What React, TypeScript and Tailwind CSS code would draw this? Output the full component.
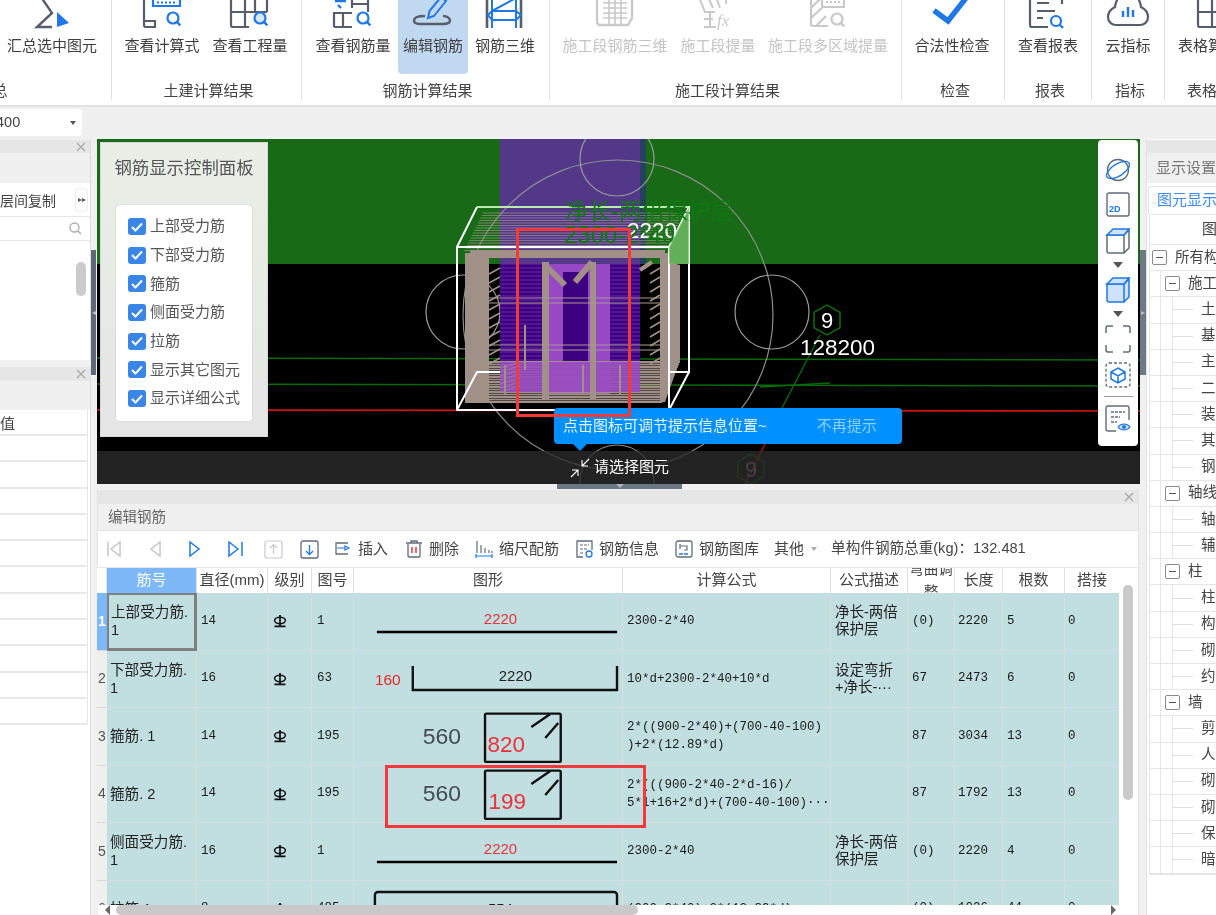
import React from 'react';

const D = '#565d6b';
const B = '#1f78e6';
const G = '#c9c9c9';

function Mag({ x, y, r = 5.5, c = B, fill = 'none' }: { x: number; y: number; r?: number; c?: string; fill?: string }) {
  return (
    <g>
      <circle cx={x} cy={y} r={r} fill={fill} stroke={c} strokeWidth="2.2" />
      <path d={`M${x + r * 0.7} ${y + r * 0.7}l3.5 3.5`} stroke={c} strokeWidth="2.4" fill="none" />
    </g>
  );
}

function Ico({ children }: { children: React.ReactNode }) {
  return (
    <svg width="40" height="31" viewBox="0 0 40 31" fill="none" className="shrink-0 overflow-visible">
      {children}
    </svg>
  );
}

const icons: Record<string, React.ReactNode> = {
  sum: (
    <Ico>
      <path d="M9 -3L20 13L5 27H20" stroke={D} strokeWidth="2.4" />
      <path d="M25 12L37 23L25 27Z" fill={B} />
    </Ico>
  ),
  calc: (
    <Ico>
      <path d="M2 -3V25a2 2 0 0 0 2 2H13V21H3" stroke={D} strokeWidth="2.2" />
      <path d="M11 -3V6H38V-3" stroke={B} strokeWidth="2.2" />
      <path d="M15 2.5H34" stroke={B} strokeWidth="2" strokeDasharray="2 2" />
      <Mag x={31} y={18} />
    </Ico>
  ),
  qty: (
    <Ico>
      <path d="M1 -3V25a2 2 0 0 0 2 2H19M1 12H37M15 -3V27M25 -3V12M37 -3V12" stroke={D} strokeWidth="2.2" />
      <Mag x={30} y={18} fill="#d8e8fb" />
    </Ico>
  ),
  rebar: (
    <Ico>
      <path d="M1 27V13H19M10 13V27M1 27H19M19 -3V8M35 -3V12M19 4H35" stroke={D} strokeWidth="2.2" />
      <path d="M2 1H13M5 5l3 3" stroke={B} strokeWidth="2.4" />
      <Mag x={30} y={18} />
    </Ico>
  ),
  edit: (
    <Ico>
      <path d="M12 16C3 16 1 18 1 20.5S3 24 8 24H30C35 24 37 22 37 20.5S35 16 30 16" stroke={D} strokeWidth="2.4" />
      <path d="M15 18L16.5 11L28 -3L33 1L21 16Z" stroke={B} strokeWidth="2" fill="#fff0" />
    </Ico>
  ),
  three: (
    <Ico>
      <path d="M2 -3V28M36 -3V28" stroke={D} strokeWidth="2.6" />
      <path d="M7 -3V28M31 -3V28M7 11H31M7 20H31M31 11L36 15L31 20M7 20L3 15L7 11M31 -2L7 11" stroke={B} strokeWidth="2" />
    </Ico>
  ),
  seg3: (
    <Ico>
      <path d="M2 -3V22a3 3 0 0 0 3 3H33L37 18V-3" stroke={G} strokeWidth="2.4" />
      <path d="M8 3H32M8 8H32M8 13H32M8 18H32M14 -3V25M20 -3V25M26 -3V25" stroke={G} strokeWidth="1.6" />
    </Ico>
  ),
  segf: (
    <Ico>
      <path d="M1 -3L7 12H17M12 12V27M6 27H18M6 19H15M10 -3L15 8M18 -3L22 8M28 -3V4" stroke={G} strokeWidth="2" />
      <text x="19" y="26" fontFamily="'Liberation Serif',serif" fontStyle="italic" fontSize="17" fill={G}>fx</text>
    </Ico>
  ),
  segm: (
    <Ico>
      <path d="M3 -3V24a2 2 0 0 0 2 2H20M3 8L14 -3M3 18L16 6M8 26L18 16" stroke={G} strokeWidth="2.2" />
      <path d="M14 -3V7H36V-3" stroke={G} strokeWidth="2" />
      <path d="M18 2H32" stroke={G} strokeWidth="2" strokeDasharray="2 2" />
      <Mag x={29} y={19} c={G} />
    </Ico>
  ),
  check: (
    <Ico>
      <path d="M2 10.5L16 21L34 -2" stroke={B} strokeWidth="5.4" />
    </Ico>
  ),
  report: (
    <Ico>
      <path d="M2 -3V25a2 2 0 0 0 2 2H20M34 4V-3" stroke={D} strokeWidth="2.2" />
      <path d="M9 3H21M9 11H27M9 18H15" stroke={D} strokeWidth="2.2" />
      <Mag x={28} y={21} r={5} />
    </Ico>
  ),
  cloud: (
    <Ico>
      <path d="M10 -2C8 2 7 4 7 7C3 9 0 13 0 17C0 22 4 25 8 25H32C36 25 40 22 40 17C40 13 37 9 33 7C33 4 32 2 30 -2" stroke={D} strokeWidth="2.2" />
      <path d="M15 11V17M20 7V17M25 10V17" stroke={B} strokeWidth="2.4" />
    </Ico>
  ),
  table: (
    <Ico>
      <path d="M10 -3V25a2 2 0 0 0 2 2H28M10 12H46M24 -3V27M36 -3V12" stroke={D} strokeWidth="2.2" />
      <Mag x={39} y={20} />
    </Ico>
  ),
};

function RBtn({ icon, label, w, dis, on, ml }: { icon: string; label: string; w: string; dis?: boolean; on?: boolean; ml?: string }) {
  return (
    <div className={`${w} ${ml ?? ''} h-[74px] shrink-0 flex flex-col items-center overflow-visible ${on ? 'bg-[#c0d8f0] rounded-b-[4px]' : ''}`}>
      {icons[icon]}
      <div className={`mt-[5px] h-[20px] leading-[20px] text-[15px] whitespace-nowrap ${dis ? 'text-[#c4c4c4]' : 'text-[#3f3f3f]'}`}>{label}</div>
    </div>
  );
}

function RGroup({ w, label, pad, children, last }: { w: string; label: string; pad?: string; children: React.ReactNode; last?: boolean }) {
  return (
    <div className={`${w} shrink-0 h-[100px] relative flex flex-col ${last ? '' : 'border-r border-[#e0e0e0]'}`}>
      <div className={`flex h-[74px] ${pad ?? ''}`}>{children}</div>
      <div className="mt-[6px] h-[22px] pl-[4px] leading-[22px] text-center text-[15px] text-[#444444] whitespace-nowrap">{label}</div>
    </div>
  );
}

function X() {
  return (
    <svg width="10" height="10" viewBox="0 0 10 10" className="shrink-0">
      <path d="M1 1L9 9M9 1L1 9" stroke="#a8a8a8" strokeWidth="1.3" />
    </svg>
  );
}

function Steel() {
  return (
    <svg width="14" height="14" viewBox="0 0 14 14">
      <ellipse cx="7" cy="6.5" rx="5.4" ry="3.2" fill="none" stroke="#111" strokeWidth="1.5" />
      <path d="M7 1V12M1.5 12.3H12.5" stroke="#111" strokeWidth="1.7" />
    </svg>
  );
}

function Shape({ kind }: { kind: number }) {
  const red = '#e8343a';
  return (
    <svg width="269" height="57" viewBox="0 0 269 57" className="block">
      {kind === 1 && (
        <>
          <text x="147" y="31" textAnchor="middle" fontSize="15" fill={red}>2220</text>
          <path d="M23 39H264" stroke="#000" strokeWidth="2.4" />
        </>
      )}
      {kind === 2 && (
        <>
          <text x="21" y="35" fontSize="15.5" fill="#ee2222">160</text>
          <path d="M59 16V40H264V16" stroke="#111" strokeWidth="2.4" fill="none" />
          <text x="162" y="31" textAnchor="middle" fontSize="15" fill="#222">2220</text>
        </>
      )}
      {(kind === 3 || kind === 4) && (
        <>
          <text x="69" y="36" fontSize="23" fill="#444b55">560</text>
          <rect x="131.5" y="5.5" width="76" height="48.5" rx="1.5" fill="none" stroke="#111" strokeWidth="2.4" />
          <path d="M178 19L197 6M192 30L205 15" stroke="#111" strokeWidth="2.4" />
          <text x={kind === 3 ? 134 : 135} y="44" fontSize="22.5" fill="#ee3038">{kind === 3 ? '820' : '199'}</text>
        </>
      )}
      {kind === 6 && (
        <>
          <path d="M21 25V15a3 3 0 0 1 3-3H261a3 3 0 0 1 3 3V25" stroke="#111" strokeWidth="2.4" fill="none" />
          <text x="147" y="34" textAnchor="middle" fontSize="15" fill="#222">554</text>
        </>
      )}
    </svg>
  );
}

const GRID = 'grid grid-cols-[10px_90px_71px_44px_42px_269px_208px_77px_47px_48px_62px_55px]';
const CELL = 'border-r border-b border-[#d6dedf] flex items-center overflow-hidden';
const MONO = "font-['Liberation_Mono','Noto_Sans_CJK_SC',monospace] text-[12.5px] text-[#1a1a1a]";

const rows = [
  { no: 1, name: ['上部受力筋.', '1'], d: '14', fig: '1', kind: 1, f: ['2300-2*40'], desc: ['净长-两倍', '保护层'], bend: '(0)', len: '2220', cnt: '5' },
  { no: 2, name: ['下部受力筋.', '1'], d: '16', fig: '63', kind: 2, f: ['10*d+2300-2*40+10*d'], desc: ['设定弯折', '+净长-···'], bend: '67', len: '2473', cnt: '6' },
  { no: 3, name: ['箍筋. 1'], d: '14', fig: '195', kind: 3, f: ['2*((900-2*40)+(700-40-100)', ')+2*(12.89*d)'], desc: [], bend: '87', len: '3034', cnt: '13' },
  { no: 4, name: ['箍筋. 2'], d: '14', fig: '195', kind: 4, f: ['2*(((900-2*40-2*d-16)/', '5*1+16+2*d)+(700-40-100)···'], desc: [], bend: '87', len: '1792', cnt: '13' },
  { no: 5, name: ['侧面受力筋.', '1'], d: '16', fig: '1', kind: 1, f: ['2300-2*40'], desc: ['净长-两倍', '保护层'], bend: '(0)', len: '2220', cnt: '4' },
  { no: 6, name: ['拉筋.1'], d: '8', fig: '485', kind: 6, f: ['(900-2*40)+2*(12.89*d)'], desc: [], bend: '(0)', len: '1026', cnt: '44' },
];

const tree: [number, string][] = [
  [0, '所有构件类型'], [1, '施工段'], [2, '土方'], [2, '基础'], [2, '主体'], [2, '二次结构'], [2, '装修'], [2, '其它'], [2, '钢筋'],
  [1, '轴线'], [2, '轴网'], [2, '辅助轴线'], [1, '柱'], [2, '柱'], [2, '构造柱'], [2, '砌体柱'], [2, '约束边缘'],
  [1, '墙'], [2, '剪力墙'], [2, '人防门框墙'], [2, '砌体墙'], [2, '砌体加筋'], [2, '保温墙'], [2, '暗梁'],
];

const checks = ['上部受力筋', '下部受力筋', '箍筋', '侧面受力筋', '拉筋', '显示其它图元', '显示详细公式'];

function Scene() {
  const hatch: number[] = [];
  for (let y = 213; y < 252; y += 2.5) hatch.push(y);
  const low: number[] = [];
  for (let y = 362; y < 403; y += 2.5) low.push(y);
  const mid: number[] = [];
  for (let y = 264; y < 362; y += 4) mid.push(y);
  const side: number[] = [];
  for (let y = 268; y < 362; y += 9) side.push(y);
  const span: number[] = [];
  for (let y = 364; y < 392; y += 4) span.push(y);
  return (
    <svg width="1043" height="345" viewBox="97 139 1043 345" className="absolute left-0 top-0">
      <rect x="97" y="139" width="1043" height="125" fill="#186a17" />
      <rect x="500" y="139" width="140" height="125" fill="#53388a" />
      <rect x="640" y="139" width="6" height="125" fill="#26405f" />
      <path d="M97 358L1140 360M97 384L1140 386" stroke="#0a6a0a" strokeWidth="1.6" />
      <path d="M760 387L830 383" stroke="#0a6a0a" strokeWidth="1.6" />
      <path d="M97 410L1140 411" stroke="#d01414" strokeWidth="1.6" />
      <path d="M820 335L782 408" stroke="#0a6a0a" strokeWidth="1.4" />
      <path d="M765 444L745 484" stroke="#b01010" strokeWidth="1.4" />
      <circle cx="618" cy="315" r="155" fill="none" stroke="#8c8c8c" strokeWidth="1.2" />
      <circle cx="617" cy="159" r="37" fill="none" stroke="#9a9a9a" strokeWidth="1.2" />
      <circle cx="463" cy="312" r="37" fill="none" stroke="#9a9a9a" strokeWidth="1.2" />
      <circle cx="772" cy="312" r="37" fill="none" stroke="#9a9a9a" strokeWidth="1.2" />
      <circle cx="617" cy="482" r="37" fill="none" stroke="#8c8c8c" strokeWidth="1.2" />
      <path d="M751 454L764 461.5V476.5L751 484L738 476.5V461.5Z" fill="none" stroke="#0d7a0d" strokeWidth="1.2" />
      <rect x="500" y="264" width="140" height="100" fill="#3c0080" />
      <rect x="542" y="264" width="68" height="130" fill="#9748c4" />
      <rect x="563" y="272" width="25" height="90" fill="#3c0080" />
      {mid.map((y) => (
        <path key={y} d={`M500 ${y}H542M610 ${y}H640`} stroke="#6a2ba8" strokeWidth="1" />
      ))}
      {hatch.map((y) => (
        <path key={y} d={`M${483 - (y - 213) * 0.5} ${y}H${684 - (y - 213) * 0.5}`} stroke="#a89a90" strokeWidth="1.1" opacity="0.62" />
      ))}
      {side.map((y) => (
        <path key={y} d={`M489 ${y + 6}L500 ${y}M650 ${y + 6}L660 ${y}`} stroke="#a09088" strokeWidth="1.6" />
      ))}
      {low.map((y) => (
        <path key={y} d={`M${488 - (y - 362) * 0.55} ${y}H${680 - (y - 362) * 0.45}`} stroke="#a09088" strokeWidth="1.9" />
      ))}
      <path d="M500 362H640V392H500Z" fill="#9748c4" opacity="0.88" />
      {span.map((y) => (
        <path key={y} d={`M500 ${y + 4}L520 ${y - 2}`} stroke="#a09088" strokeWidth="1" opacity="0.7" />
      ))}
      <rect x="465" y="253" width="24" height="150" fill="#a09088" />
      <rect x="660" y="253" width="9" height="120" fill="#a09088" />
      <path d="M669 262L680 265V360L665 402H660V262Z" fill="#a09088" />
      <path d="M470 250H665V258H470Z" fill="#a09088" />
      <path d="M542 262H549V400H542ZM590 262H596V400H590Z" fill="#a09088" />
      <path d="M545 265L565 285M592 262L575 282" stroke="#a09088" strokeWidth="6" />
      <path d="M652 262L640 270" stroke="#a09088" strokeWidth="4" />
      <path d="M489 298H660M489 303H660M489 345H660M489 350H660" stroke="#a89a90" strokeWidth="1.2" />
      <path d="M525 325V370M505 365V395M583 365V395M620 365V395" stroke="#a09088" strokeWidth="2" />
      <path d="M457 247H669V410H457ZM477 207H689V372H669M457 247L477 207M669 247L689 207M457 410L477 372H500M669 410L689 372" fill="none" stroke="#ffffff" strokeWidth="2" />
      <path d="M669 247L689 207V264H669Z" fill="#75c06c" opacity="0.8" />
      <path d="M477 207H689" stroke="#b9eab0" strokeWidth="2" />
      <text x="627" y="238" fontSize="22.5" fill="#ffffff">2220</text>
      <text x="565" y="219" fontSize="23" fill="#0c7a10">净长-两倍保护层</text>
      <text x="564" y="243" fontSize="24" fill="#0c7a10">2300-2*40</text>
      <path d="M827 305L840 312.5V327.5L827 335L814 327.5V312.5Z" fill="none" stroke="#0d7a0d" strokeWidth="1.4" />
      <text x="827" y="328" textAnchor="middle" fontSize="22" fill="#ffffff">9</text>
      <text x="800" y="355" fontSize="22.5" fill="#ffffff">128200</text>
      <text x="751" y="477" textAnchor="middle" fontSize="22" fill="#999999">9</text>
    </svg>
  );
}

function ToolIcon({ children }: { children: React.ReactNode }) {
  return (
    <svg width="18" height="20" viewBox="0 0 18 20" fill="none" className="shrink-0">
      {children}
    </svg>
  );
}

function Tool({ ml, icon, label }: { ml: string; icon: React.ReactNode; label: string }) {
  return (
    <div className={`${ml} flex items-center gap-[6px] shrink-0`}>
      <ToolIcon>{icon}</ToolIcon>
      <span>{label}</span>
    </div>
  );
}

export default function App() {
  return (
    <div className="w-[1216px] h-[915px] overflow-hidden flex flex-col bg-[#f0f0f0] text-[#444444] font-['Liberation_Sans','Noto_Sans_CJK_SC',sans-serif] [filter:blur(0.35px)]">
      {/* ribbon */}
      <div className="h-[107px] shrink-0 bg-white border-b-2 border-[#e2e2e2] flex overflow-hidden">
        <div className="flex ml-[-130px]">
          <RGroup w="w-[242px]" label="汇总" pad="justify-end pr-[14px]">
            <RBtn icon="sum" label="汇总选中图元" w="w-[90px]" />
          </RGroup>
          <RGroup w="w-[190px]" label="土建计算结果" pad="pl-[6px]">
            <RBtn icon="calc" label="查看计算式" w="w-[88px]" />
            <RBtn icon="qty" label="查看工程量" w="w-[88px]" />
          </RGroup>
          <RGroup w="w-[248px]" label="钢筋计算结果" pad="pl-[11px]">
            <RBtn icon="rebar" label="查看钢筋量" w="w-[80px]" />
            <RBtn icon="edit" label="编辑钢筋" w="w-[70px]" ml="ml-[5px]" on />
            <RBtn icon="three" label="钢筋三维" w="w-[70px]" ml="ml-[2px]" />
          </RGroup>
          <RGroup w="w-[352px]" label="施工段计算结果" pad="pl-[10px]">
            <RBtn icon="seg3" label="施工段钢筋三维" w="w-[110px]" dis />
            <RBtn icon="segf" label="施工段提量" w="w-[96px]" dis />
            <RBtn icon="segm" label="施工段多区域提量" w="w-[124px]" dis />
          </RGroup>
          <RGroup w="w-[103px]" label="检查">
            <RBtn icon="check" label="合法性检查" w="w-[100px]" />
          </RGroup>
          <RGroup w="w-[87px]" label="报表">
            <RBtn icon="report" label="查看报表" w="w-[86px]" />
          </RGroup>
          <RGroup w="w-[73px]" label="指标">
            <RBtn icon="cloud" label="云指标" w="w-[72px]" />
          </RGroup>
          <RGroup w="w-[100px]" label="表格算量" last>
            <RBtn icon="table" label="表格算量" w="w-[86px]" />
          </RGroup>
        </div>
      </div>

      {/* selector bar */}
      <div className="h-[32px] shrink-0 flex items-start pt-[2px]">
        <div className="w-[82px] h-[27px] bg-white rounded-r-[4px] flex items-center justify-between pr-[6px] text-[14.5px] text-[#444444]">
          <span className="ml-[-4px]">400</span>
          <span className="w-0 h-0 border-x-[3px] border-x-transparent border-t-[4px] border-t-[#555555]" />
        </div>
      </div>

      {/* main */}
      <div className="flex-1 flex min-h-0">
        {/* left */}
        <div className="w-[91px] shrink-0 flex flex-col pt-px">
          <div className="h-[220px] shrink-0 bg-white border-r border-[#dddddd] flex flex-col">
            <div className="h-[13px] bg-[#e6e6e6] flex items-center justify-end pr-[4px]"><X /></div>
            <div className="h-[30px] bg-[#f0f0f0]" />
            <div className="h-[34px] flex items-center justify-between pr-[2px] border-b border-[#e6e6e6]">
              <span className="text-[14px] pt-[3px] whitespace-nowrap">层间复制</span>
              <div className="w-[13px] h-[24px] border border-[#eeeeee] rounded-[4px] text-[8px] leading-[22px] text-center text-[#555555]">▸▸</div>
            </div>
            <div className="h-[24px] flex items-center justify-end pr-[8px] border-b border-[#e6e6e6]">
              <svg width="13" height="13" viewBox="0 0 13 13" fill="none"><circle cx="5.5" cy="5.5" r="4.5" stroke="#b0b0b0" strokeWidth="1.4" /><path d="M9 9l3 3" stroke="#b0b0b0" strokeWidth="1.6" /></svg>
            </div>
            <div className="flex-1 flex justify-end pr-[4px] pt-[21px]">
              <div className="w-[10px] h-[34px] rounded-[5px] bg-[#cbcbcb]" />
            </div>
          </div>
          <div className="flex-1 mt-[7px] bg-white border-r border-[#dddddd] flex flex-col">
            <div className="h-[14px] shrink-0 bg-[#e6e6e6] flex items-center justify-end pr-[4px]"><X /></div>
            <div className="h-[29px] shrink-0 bg-[#f0f0f0]" />
            <div className="w-[88px] border-r border-[#e6e6e6]">
              <div className="h-[26px] border-b-2 border-[#e8e8e8] text-[15px] leading-[27px] whitespace-nowrap">值</div>
              {Array.from({ length: 11 }).map((_, i) => (
                <div key={i} className="h-[26.3px] border-b-2 border-[#e8e8e8]" />
              ))}
            </div>
          </div>
        </div>

        {/* left splitter */}
        <div className="w-[6px] shrink-0 pt-[111px]">
          <div className="w-[5px] h-[125px] bg-[#5f6975] flex items-center justify-center text-[8px] text-[#b9c0c8]">◂</div>
        </div>

        {/* center */}
        <div className="w-[1043px] shrink-0 flex flex-col">
          <div className="h-[345px] shrink-0 relative bg-black overflow-hidden">
            <Scene />
            {/* control panel */}
            <div className="absolute left-[3px] top-[3px] w-[168px] h-[295px] bg-gradient-to-b from-[#e9efe7] to-[#e5e5e5] border border-[#d8d8d8] pt-[13px]">
              <div className="text-center text-[17.4px] leading-[24px] text-[#555555] whitespace-nowrap">钢筋显示控制面板</div>
              <div className="mt-[24px] mx-[14px] h-[218px] bg-white rounded-[4px] border border-[#dddddd] pl-[12px] pt-[13px] flex flex-col gap-[11.7px]">
                {checks.map((c) => (
                  <div key={c} className="flex items-center h-[17px] gap-[4px] whitespace-nowrap text-[15px] text-[#555555]">
                    <span className="w-[18px] h-[17px] rounded-[3px] bg-[#3a86e6] flex items-center justify-center shrink-0">
                      <svg width="12" height="10" viewBox="0 0 12 10" fill="none"><path d="M1 5l3.5 3.5L11 1.5" stroke="#fff" strokeWidth="2" /></svg>
                    </span>
                    {c}
                  </div>
                ))}
              </div>
            </div>
            {/* view toolbar */}
            <div className="absolute left-[1001px] top-[1px] w-[40px] h-[306px] bg-white rounded-[4px] flex flex-col items-center pt-[16px]">
              <svg width="28" height="28" viewBox="0 0 28 28" fill="none" className="shrink-0">
                <circle cx="14" cy="14" r="10.5" stroke="#5f6b7a" strokeWidth="1.3" />
                <ellipse cx="14" cy="14" rx="13" ry="6" transform="rotate(-32 14 14)" stroke={B} strokeWidth="1.4" />
              </svg>
              <svg width="24" height="25" viewBox="0 0 24 25" fill="none" className="mt-[8px] shrink-0">
                <rect x="1" y="1" width="22" height="23" rx="2" stroke="#5f6b7a" strokeWidth="1.4" />
                <text x="3" y="20" fontSize="9" fontWeight="700" fill={B}>2D</text>
              </svg>
              <svg width="26" height="28" viewBox="0 0 26 28" fill="none" className="mt-[10px] shrink-0">
                <path d="M2 8H19V26H4a2 2 0 0 1-2-2ZM19 26L24 21V3L19 8" stroke="#5f6b7a" strokeWidth="1.5" />
                <path d="M2 8L8 2H24L19 8Z" fill="#cfe2fb" stroke={B} strokeWidth="1.5" />
              </svg>
              <span className="mt-[7px] w-0 h-0 border-x-[5px] border-x-transparent border-t-[6px] border-t-[#555555] shrink-0" />
              <svg width="26" height="28" viewBox="0 0 26 28" fill="none" className="mt-[8px] shrink-0">
                <path d="M2 8H19V26H4a2 2 0 0 1-2-2ZM19 26L24 21V3L19 8" fill="#cfe2fb" stroke={B} strokeWidth="1.5" />
                <path d="M2 8L8 2H24L19 8Z" fill="#cfe2fb" stroke={B} strokeWidth="1.5" />
              </svg>
              <span className="mt-[7px] w-0 h-0 border-x-[5px] border-x-transparent border-t-[6px] border-t-[#555555] shrink-0" />
              <svg width="26" height="28" viewBox="0 0 26 28" fill="none" className="mt-[8px] shrink-0">
                <path d="M1 8V3a2 2 0 0 1 2-2H8M18 1H23a2 2 0 0 1 2 2V8M25 20V25a2 2 0 0 1-2 2H18M8 27H3a2 2 0 0 1-2-2V20" stroke="#5f6b7a" strokeWidth="1.5" />
              </svg>
              <svg width="26" height="26" viewBox="0 0 26 26" fill="none" className="mt-[9px] shrink-0">
                <rect x="1" y="1" width="24" height="24" rx="3" stroke="#5f6b7a" strokeWidth="1.3" strokeDasharray="3 2" />
                <path d="M13 6L20 10V17L13 21L6 17V10ZM6 10L13 14L20 10M13 14V21" stroke={B} strokeWidth="1.5" />
              </svg>
              <div className="mt-[8px] w-[29px] h-px bg-[#9a9a9a] shrink-0" />
              <svg width="26" height="28" viewBox="0 0 26 28" fill="none" className="mt-[8px] shrink-0">
                <path d="M11 26H3a2 2 0 0 1-2-2V3a2 2 0 0 1 2-2H22a2 2 0 0 1 2 2V15" stroke="#5f6b7a" strokeWidth="1.4" />
                <path d="M6 7H20M6 12H15M6 17H12" stroke="#5f6b7a" strokeWidth="1.3" strokeDasharray="3 1" />
                <path d="M13 22C16 18 22 18 25 22C22 26 16 26 13 22Z" fill="#cfe2fb" stroke={B} strokeWidth="1.2" />
                <circle cx="19" cy="22" r="2" fill={B} />
              </svg>
            </div>
            {/* status bar */}
            <div className="absolute left-0 bottom-0 w-full h-[33px] bg-[#2a2a2a]/80 flex items-center pl-[473px] text-[15px] text-white whitespace-nowrap">
              <svg width="20" height="20" viewBox="0 0 20 20" fill="none" className="mr-[4px]">
                <path d="M19 1L12 8M12 2V8H18M1 19L8 12M2 12H8V18" stroke="#fff" strokeWidth="1.1" />
              </svg>
              请选择图元
            </div>
            {/* tip */}
            <div className="absolute left-[457px] top-[269px] w-[348px] h-[36px] bg-[#0091ff] rounded-[4px] flex items-center pl-[9px] text-[15px] whitespace-nowrap text-[#e8f4ff]">
              <span>点击图标可调节提示信息位置~</span>
              <span className="ml-[50px] text-[#8fcfff]">不再提示</span>
              <span className="absolute left-[19px] top-[36px] w-0 h-0 border-x-[7px] border-x-transparent border-t-[7px] border-t-[#0091ff]" />
            </div>
            {/* red annotation over the model */}
            <div className="absolute left-[419px] top-[89px] w-[115px] h-[189px] border-[3px] border-[#f53838] pointer-events-none" />
          </div>
          {/* collapse tab */}
          <div className="h-[6px] shrink-0 flex">
            <div className="ml-[460px] w-[125px] h-[5px] bg-[#6b7785] flex justify-center">
              <span className="w-0 h-0 border-x-[4px] border-x-transparent border-t-[4px] border-t-[#aeb6bf]" />
            </div>
          </div>

          {/* bottom panel */}
          <div className="flex-1 min-h-0 flex flex-col bg-white w-[1042px] border-x border-[#e2e2e2]">
            <div className="h-[14px] shrink-0 bg-[#e6e6e6] flex items-center justify-end pr-[4px]"><X /></div>
            <div className="h-[27px] shrink-0 bg-[#f0f0f0] border-b border-[#e6e6e6] pl-[10px] text-[14.5px] leading-[27px] text-[#666666]">编辑钢筋</div>
            <div className="h-[37px] shrink-0 border-b border-[#e6e6e6] flex items-center text-[15px] text-[#444444] whitespace-nowrap">
              <svg width="224" height="20" viewBox="0 0 224 20" fill="none" className="ml-[9px] shrink-0">
                <path d="M1 3V17M13 3L4 10L13 17Z" stroke="#c4c4c4" strokeWidth="1.4" />
                <path d="M53 3L44 10L53 17Z" stroke="#c4c4c4" strokeWidth="1.4" />
                <path d="M83 3L92 10L83 17Z" stroke={B} strokeWidth="1.5" />
                <path d="M122 3L131 10L122 17Z M135 3V17" stroke={B} strokeWidth="1.5" />
                <rect x="158" y="2" width="17" height="17" rx="2" stroke="#c9c9c9" strokeWidth="1.2" />
                <path d="M166.5 15V6M163 9l3.5-3.5L170 9" stroke="#c9c9c9" strokeWidth="1.2" />
                <rect x="194" y="2" width="17" height="17" rx="2" stroke="#5f6b7a" strokeWidth="1.3" />
                <path d="M202.5 6V15M199 12l3.5 3.5L206 12" stroke={B} strokeWidth="1.3" />
              </svg>
              <Tool ml="ml-[3px]" label="插入" icon={<><path d="M14 4H2V15H14" stroke="#5f6b7a" strokeWidth="1.3" /><path d="M3 9H11M11 7l4 2-4 2Z" stroke={B} strokeWidth="1.2" /></>} />
              <Tool ml="ml-[17px]" label="删除" icon={<><path d="M3 5V17a1 1 0 0 0 1 1H14a1 1 0 0 0 1-1V5M1 4H17M6 4V2H12V4" stroke="#5f6b7a" strokeWidth="1.3" /><path d="M7 8V14M11 8V14" stroke="#e03030" strokeWidth="1.4" /></>} />
              <Tool ml="ml-[16px]" label="缩尺配筋" icon={<><path d="M2 2V14M6 6V14M10 9V14M14 11V14M17 12V14" stroke="#5f6b7a" strokeWidth="1.2" /><path d="M1 15V19M17 15V19M1 17H17" stroke={B} strokeWidth="1.2" /></>} />
              <Tool ml="ml-[16px]" label="钢筋信息" icon={<><path d="M8 18H2V2H17V11" stroke="#5f6b7a" strokeWidth="1.3" /><path d="M5 6H14M5 10H12M5 14H9" stroke="#5f6b7a" strokeWidth="1.1" strokeDasharray="3 1" /><circle cx="14" cy="15" r="3" stroke={B} strokeWidth="1.3" /></>} />
              <Tool ml="ml-[16px]" label="钢筋图库" icon={<><rect x="1" y="2" width="16" height="16" rx="2" stroke="#5f6b7a" strokeWidth="1.3" /><path d="M5 5V10M5 7H12V11H9" stroke="#5f6b7a" strokeWidth="1.2" /><path d="M4 15H14" stroke={B} strokeWidth="1.4" strokeDasharray="4 1" /></>} />
              <span className="ml-[15px]">其他</span>
              <span className="ml-[7px] w-0 h-0 border-x-[3px] border-x-transparent border-t-[4px] border-t-[#aaaaaa]" />
              <span className="ml-[14px] text-[14.6px]">单构件钢筋总重(kg)：132.481</span>
            </div>

            <div className="flex-1 min-h-0 flex relative">
              <div className="w-[1022px] shrink-0 overflow-hidden -ml-px">
                <div className={`${GRID} h-[25px] text-[15px] text-[#444444] text-center`}>
                  {[['', 'bg-white'], ['筋号', 'bg-[#7db8f8] text-white'], ['直径(mm)', 'bg-white'], ['级别', 'bg-white'], ['图号', 'bg-white'], ['图形', 'bg-white'], ['计算公式', 'bg-white'], ['公式描述', 'bg-white']].map(([t, c], i) => (
                    <div key={i} className={`${c} border-r border-[#e2e2e2] flex items-center justify-center whitespace-nowrap`}>{t}</div>
                  ))}
                  <div className="border-r border-[#e2e2e2] bg-white flex items-center justify-center overflow-hidden leading-[23px] text-[14.5px]">
                    <span className="shrink-0">弯曲调<br />整</span>
                  </div>
                  {['长度', '根数', '搭接'].map((t) => (
                    <div key={t} className="border-r border-[#e2e2e2] bg-white flex items-center justify-center">{t}</div>
                  ))}
                </div>
                {rows.map((r) => (
                  <div key={r.no} className={`${GRID} h-[57.5px] bg-[#c1dee0]`}>
                    <div className={`${r.no === 1 ? 'bg-[#7db8f8] text-white font-bold' : 'bg-[#efefef] text-[#555555]'} border-b border-[#d8d8d8] flex items-center justify-center text-[14px]`}>{r.no}</div>
                    <div className={`${r.no === 1 ? 'border-2 border-r-[3px] border-b-[3px] border-[#808080] pl-[2px]' : `${CELL} pl-[3px]`} flex items-center text-[14.6px] leading-[18px] text-[#222222] whitespace-nowrap overflow-hidden`}>
                      <div>{r.name.map((l, i) => <div key={i}>{l}</div>)}</div>
                    </div>
                    <div className={`${CELL} ${MONO} pl-[4px]`}>{r.d}</div>
                    <div className={`${CELL} pl-[5px]`}><Steel /></div>
                    <div className={`${CELL} ${MONO} pl-[5px]`}>{r.fig}</div>
                    <div className={`${CELL} font-['Liberation_Sans',sans-serif]`}><Shape kind={r.kind} /></div>
                    <div className={`${CELL} ${MONO} pl-[4px] leading-[18px] whitespace-nowrap`}>
                      <div>{r.f.map((l, i) => <div key={i}>{l}</div>)}</div>
                    </div>
                    <div className={`${CELL} pl-[4px] text-[14.5px] leading-[17px] text-[#222222] whitespace-nowrap`}>
                      <div>{r.desc.map((l, i) => <div key={i}>{l}</div>)}</div>
                    </div>
                    <div className={`${CELL} ${MONO} pl-[4px]`}>{r.bend}</div>
                    <div className={`${CELL} ${MONO} pl-[3px]`}>{r.len}</div>
                    <div className={`${CELL} ${MONO} pl-[4px]`}>{r.cnt}</div>
                    <div className={`${CELL} ${MONO} pl-[3px]`}>0</div>
                  </div>
                ))}
              </div>
              <div className="flex-1 pl-[4px] pt-[17px]">
                <div className="w-[10px] h-[215px] rounded-[5px] bg-[#c9c9c9]" />
              </div>
              {/* red annotation */}
              <div className="absolute left-[287px] top-[197px] w-[261px] h-[63px] border-[3px] border-[#f53838] pointer-events-none" />
              {/* horizontal scrollbar */}
              <div className="absolute left-0 bottom-0 w-full h-[10px] bg-white flex items-center pl-[7px]">
                <span className="w-0 h-0 border-y-[5px] border-y-transparent border-r-[5px] border-r-[#666666]" />
                <div className="ml-[6px] w-[522px] h-[10px] rounded-[5px] bg-[#c9c9c9]" />
                <span className="ml-[473px] w-0 h-0 border-y-[5px] border-y-transparent border-l-[5px] border-l-[#666666]" />
              </div>
            </div>
          </div>
        </div>

        {/* right splitter */}
        <div className="w-[6px] shrink-0 pt-[111px]">
          <div className="w-[6px] h-[125px] bg-[#6f7985] flex items-center justify-center text-[8px] text-[#b9c0c8]">▸</div>
        </div>

        {/* right */}
        <div className="flex-1 min-w-0 bg-white border-l border-[#e2e2e2] flex flex-col overflow-hidden pt-px">
          <div className="h-[13px] shrink-0 bg-[#e6e6e6]" />
          <div className="h-[30px] shrink-0 bg-[#f0f0f0] pl-[9px] text-[15px] leading-[30px] text-[#777777] whitespace-nowrap">显示设置级别</div>
          <div className="h-[31px] shrink-0 pl-[1px] pt-[3px] flex">
            <div className="w-[80px] h-[28px] border border-b-0 border-[#e2e2e2] rounded-t-[4px] pl-[8px] text-[15px] leading-[26px] text-[#3f8cec] whitespace-nowrap">图元显示</div>
          </div>
          <div className="ml-[2px] w-[80px] border border-[#e4e4e4] border-r-0">
            <div className="h-[30px] border-b border-[#e4e4e4] pl-[52px] text-[15px] leading-[28px] whitespace-nowrap">图层构件</div>
            {tree.map(([lv, t], i) => (
              <div key={i} className="h-[26.2px] border-b border-[#e6e6e6] flex items-center text-[14.5px] text-[#444444] whitespace-nowrap">
                {lv === 0 && (
                  <>
                    <span className="ml-[2px] w-[15px] h-[15px] border border-[#8a8a8a] rounded-[2px] flex items-center justify-center shrink-0"><span className="w-[7px] h-px bg-[#555555]" /></span>
                    <span className="ml-[8px]">{t}</span>
                  </>
                )}
                {lv === 1 && (
                  <>
                    <span className="ml-[10px] w-px h-full bg-[#e6e6e6] shrink-0" />
                    <span className="ml-[4px] w-[15px] h-[15px] border border-[#8a8a8a] rounded-[2px] flex items-center justify-center shrink-0"><span className="w-[7px] h-px bg-[#555555]" /></span>
                    <span className="ml-[8px]">{t}</span>
                  </>
                )}
                {lv === 2 && (
                  <>
                    <span className="ml-[10px] w-px h-full bg-[#e6e6e6] shrink-0" />
                    <span className="ml-[11px] w-px h-full bg-[#e6e6e6] shrink-0" />
                    <span className="w-[20px] h-px bg-[#dddddd] shrink-0" />
                    <span className="ml-[8px]">{t}</span>
                  </>
                )}
              </div>
            ))}
          </div>
        </div>
      </div>
    </div>
  );
}
